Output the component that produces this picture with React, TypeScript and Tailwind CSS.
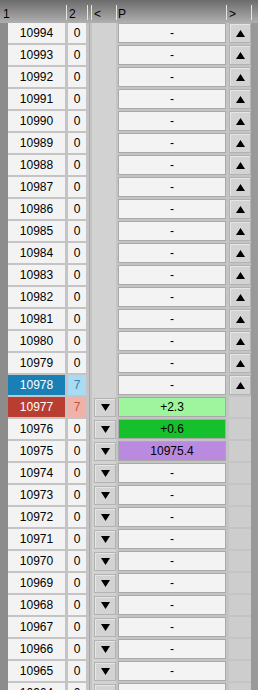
import React from "react";

const rows = Array.from({ length: 31 }, (_, i) => 10994 - i);

function Tri({ up }: { up: boolean }) {
    return (
        <svg width="9" height="7" viewBox="0 0 9 7">
            <polygon points={up ? "4.5,0 9,7 0,7" : "0,0 9,0 4.5,7"} fill="#000" />
        </svg>
    );
}

function Btn({ up }: { up: boolean }) {
    return (
        <div className="flex h-full w-full items-center justify-center border border-[#b2b2b2] bg-[#d3d3d3] shadow-[inset_1px_1px_0_#e6e6e6]">
            <Tri up={up} />
        </div>
    );
}

function Row({ n }: { n: number }) {
    const blue = n === 10978;
    const red = n === 10977;
    const p =
        n === 10977
            ? { text: "+2.3", cls: "bg-[#9ef59e]" }
            : n === 10976
              ? { text: "+0.6", cls: "bg-[#16c02c]" }
              : n === 10975
                ? { text: "10975.4", cls: "bg-[#b98ae0]" }
                : { text: "-", cls: "bg-[#f3f3f3]" };

    return (
        <div className="flex h-[22px] shrink-0 bg-[#c4c4c4]">
            <div className="w-[8px] bg-[#8c8c8c]" />
            <div
                className={`flex h-[20px] w-[57px] items-center justify-center ${
                    blue ? "bg-[#1a7fb5] text-white" : red ? "bg-[#b93d31] text-white" : "bg-[#f3f3f3] text-black"
                }`}
            >
                {n}
            </div>
            <div className="w-[3px]" />
            <div
                className={`flex h-[20px] w-[18px] items-center justify-center ${
                    blue ? "bg-[#a9dbf3] text-[#3a7fa8]" : red ? "bg-[#f0b1a9] text-[#c0524a]" : "bg-[#f3f3f3] text-black"
                }`}
            >
                {blue || red ? 7 : 0}
            </div>
            <div className="flex w-[6px] justify-center">
                <div className="w-px bg-[#a8a8a8]" />
            </div>
            <div className="h-full w-[24px] bg-[#d2d2d2] pl-[2px] pt-[1px] pb-[2px]">
                {n <= 10977 && <Btn up={false} />}
            </div>
            <div className="w-[2px]" />
            <div className={`flex h-[20px] w-[108px] items-center justify-center border border-[#a9a9a9] text-black ${p.cls}`}>
                {p.text}
            </div>
            <div className="w-[3px]" />
            <div className="h-[20px] w-[22px] bg-[#cdcdcd]">{n >= 10978 && <Btn up={true} />}</div>
            <div className="w-[7px] bg-[#999999]" />
        </div>
    );
}

export default function App() {
    return (
        <div className="flex h-[690px] w-[258px] flex-col overflow-hidden bg-[#c4c4c4] font-['Liberation_Sans',Arial,sans-serif] text-[12px] leading-none">
            <div className="relative flex h-[23px] shrink-0 items-end bg-gradient-to-b from-[#6c6c6c] to-[#b0b0b0] pb-[3px] text-black">
                <span className="w-[66px] pl-[3px]">1</span>
                <span className="h-[15px] w-px bg-[#e4e4e4]" />
                <span className="w-[20px] pl-[2px]">2</span>
                <span className="h-[15px] w-px bg-[#e4e4e4]" />
                <span className="w-[3px]" />
                <span className="h-[15px] w-px bg-[#e4e4e4]" />
                <span className="w-[24px] pl-[2px]">&lt;</span>
                <span className="h-[15px] w-px bg-[#e4e4e4]" />
                <span className="w-[109px] pl-[1px]">P</span>
                <span className="h-[15px] w-px bg-[#e4e4e4]" />
                <span className="w-[24px] pl-[2px]">&gt;</span>
                <span className="h-[15px] w-px bg-[#e4e4e4]" />
            </div>
            {rows.map((n) => (
                <Row key={n} n={n} />
            ))}
        </div>
    );
}
